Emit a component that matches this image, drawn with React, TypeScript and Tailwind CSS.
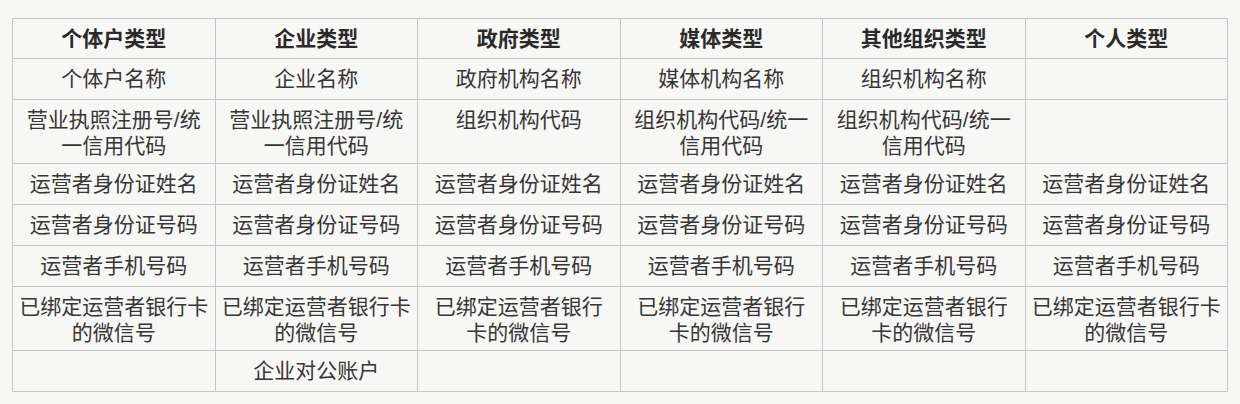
import React from 'react';

type Cell = string[];

const headers = ['个体户类型', '企业类型', '政府类型', '媒体类型', '其他组织类型', '个人类型'];

const bankCard: Cell = ['已绑定运营者银行卡', '的微信号'];
const bankCardShort: Cell = ['已绑定运营者银行', '卡的微信号'];

// each row: six cells, every cell a list of lines (explicit breaks keep wrapping as in the picture)
const rows: { tall?: boolean; cells: Cell[] }[] = [
  { cells: [['个体户名称'], ['企业名称'], ['政府机构名称'], ['媒体机构名称'], ['组织机构名称'], []] },
  {
    tall: true,
    cells: [
      ['营业执照注册号/统', '一信用代码'],
      ['营业执照注册号/统', '一信用代码'],
      ['组织机构代码'],
      ['组织机构代码/统一', '信用代码'],
      ['组织机构代码/统一', '信用代码'],
      [],
    ],
  },
  { cells: Array(6).fill(['运营者身份证姓名']) },
  { cells: Array(6).fill(['运营者身份证号码']) },
  { cells: Array(6).fill(['运营者手机号码']) },
  { tall: true, cells: [bankCard, bankCard, bankCardShort, bankCardShort, bankCardShort, bankCard] },
  { cells: [[], ['企业对公账户'], [], [], [], []] },
];

export default function App() {
  return (
    <div
      className="w-[1240px] h-[404px] overflow-hidden bg-[#f7f7f5] pt-[18px] pl-[12px] text-[#363636]"
      style={{ fontFamily: '"Liberation Sans", "Noto Sans CJK SC", sans-serif' }}
    >
      <table className="w-[1216px] table-fixed border-collapse text-[21px] leading-[26px]">
        <thead>
          <tr>
            {headers.map((h) => (
              <th
                key={h}
                className="h-[40px] border border-[#c4c4c4] px-1 py-0 text-center align-middle font-bold text-[#2a2a2a]"
              >
                {h}
              </th>
            ))}
          </tr>
        </thead>
        <tbody>
          {rows.map((row, i) => (
            <tr key={i}>
              {row.cells.map((lines, j) => (
                <td
                  key={j}
                  className={`border border-[#c4c4c4] px-1 text-center whitespace-nowrap ${
                    row.tall ? 'h-[64px] pt-[7px] align-top' : 'h-[41px] py-0 align-middle'
                  }`}
                >
                  {lines.map((l, k) => (
                    <div key={k}>{l}</div>
                  ))}
                </td>
              ))}
            </tr>
          ))}
        </tbody>
      </table>
    </div>
  );
}
